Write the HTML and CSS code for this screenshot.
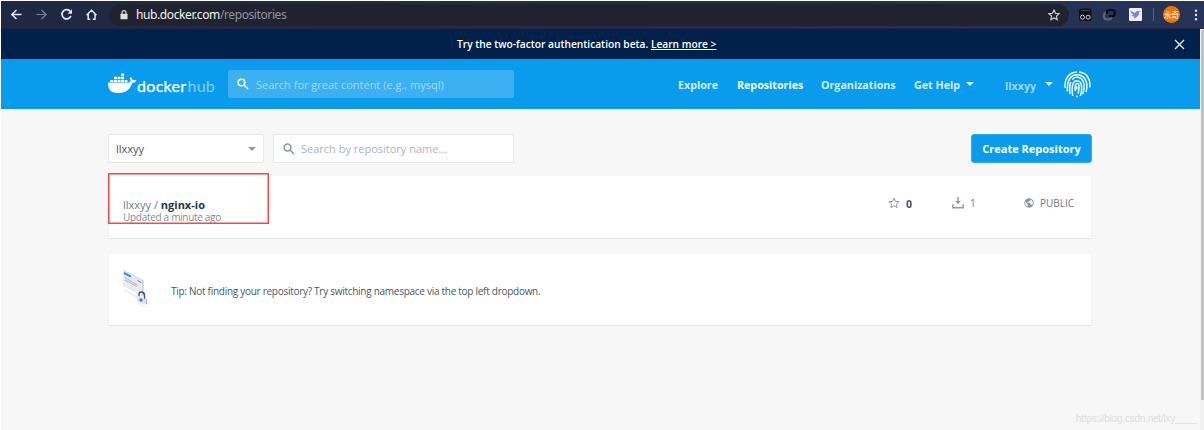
FILE: index.html
```html
<!DOCTYPE html>
<html lang="en">
<head>
<meta charset="utf-8">
<title>Docker Hub</title>
<link rel="stylesheet" href="styles.css">
</head>
<body>
<div class="window">
  <div class="chrome">
    <svg class="nav-icons" width="104" height="28" viewBox="0 0 104 28" fill="none" stroke="#e4e8ef" stroke-width="1.5">
      <path d="M20.5 13.5H11M15.5 9l-4.7 4.5 4.700 4.500"/>
      <path d="M35.500 13.500H45M40.500 9l4.700 4.500-4.700 4.500" stroke="#7a8292" stroke-width="1.200"/>
      <path d="M69.300 10.500a4.600 4.600 0 1 0 .6 4.500" stroke-width="1.700"/>
      <path d="M71 8.300v4.500h-4.500z" fill="#e4e8ef" stroke="none"/>
      <path d="M85.500 14.200l5-4.900 5 4.900M87.200 13v5.300h2M94 13v5.300h-2.200"/>
    </svg>
    <div class="address">
      <svg width="8" height="10" viewBox="0 0 8 10"><path d="M2 4V2.700a2 2 0 0 1 4 0V4" fill="none" stroke="#dfe0e3" stroke-width="1.200"/><rect x=".5" y="3.700" width="7" height="5.600" rx=".6" fill="#dfe0e3"/></svg>
      <span class="url">hub.docker.com<span class="url-path">/repositories</span></span>
      <svg class="bookmark" width="12" height="12" viewBox="0 0 12 12"><path d="M6 1l1.500 3.300 3.600.4-2.700 2.400.8 3.600L6 8.900l-3.200 1.800.8-3.600L.9 4.700l3.600-.4z" fill="none" stroke="#d5d7dc" stroke-width="1.100"/></svg>
    </div>
    <svg class="extensions" width="60" height="28" viewBox="0 0 60 28">
      <rect x="1" y="7.500" width="12.500" height="12.500" rx="2" fill="#101116"/>
      <g fill="none" stroke="#c9ccd1"><circle cx="4.500" cy="16.200" r="2"/><circle cx="10.200" cy="16.200" r="2"/></g>
      <path d="M3 9.500h9" stroke="#3b3d45"/>
      <g fill="none" stroke-width="2.200"><path d="M33.500 15.500q0 2.800-2.500 2.800h-2.500q-2.500 0-2.500-2.500v-1.500q0-2.500 2.500-2.500H30" stroke="#5c6370"/><path d="M29 13V11.500q0-2.500 2.500-2.500H34q2.700 0 2.700 2.500V13q0 2.200-2.500 2.200H31" stroke="#090b12"/></g>
    </svg>
    <svg width="13" height="13" viewBox="0 0 13 13"><rect width="13" height="13" rx="1.200" fill="#f0f2fb"/><path d="M1.200 2.500l4.500 2.600q1.500-2.400 4-2.400l2.200.8-1.700.6q.2 3.300-2.200 5-1.500 1.100-3.400 1.700l.8-2Q3.400 8.600 2.600 7l2 .1Q1.800 5.500 1.200 2.500z" fill="#7187f0"/></svg>
    <span class="divider"></span>
    <span class="avatar">永奇</span>
    <svg class="dots" width="4" height="12" viewBox="0 0 4 12" fill="#e2e5ec"><circle cx="2" cy="1.700" r="1.200"/><circle cx="2" cy="6" r="1.200"/><circle cx="2" cy="10.300" r="1.200"/></svg>
  </div>

  <div class="viewport">
    <div class="page">
      <div class="banner">
        <p class="banner-text">Try the two-factor authentication beta. <a>Learn more &gt;</a></p>
        <svg class="close" width="11" height="11" viewBox="0 0 11 11"><path d="M1 1l9 9M10 1l-9 9" stroke="#e7edf3" stroke-width="1.400"/></svg>
      </div>
      <header class="header">
        <div class="logo">
          <svg width="29" height="22" viewBox="0 0 29 22" fill="#fff">
            <path d="M0 9.500h21.200c1-.3 1.500-.9 1.300-1.800-.8-1.400-.7-2.500 0-3.600 1.400.8 2 1.900 2.100 3 1.300-.3 2.600-.2 3.900.5-.7 1.700-2.200 2.400-4.300 2.500C22.200 16.500 18.200 20 10.400 20 3.300 20 .1 17.200 0 9.500z"/>
            <path d="M2.300 7h2.900v2H2.300zM6 7h2.900v2H6zM9.600 7h2.900v2H9.600zM13.200 7h2.900v2h-2.900zM16.800 7h2.600v2h-2.600zM6 3.700h2.900v2.500H6zM9.600 3.700h2.900v2.500H9.600zM13.200 3.700h2.900v2.500h-2.900zM13.200.4h2.900v2.500h-2.900z"/>
          </svg>
          <span class="brand">docker</span><span class="brand-hub">hub</span>
        </div>
        <div class="top-search">
          <svg width="12" height="12" viewBox="0 0 12 12" fill="none" stroke="#fff" stroke-width="1.500"><circle cx="4.500" cy="4.500" r="3.300"/><path d="M7 7l4 4"/></svg>
          <span>Search for great content (e.g., mysql)</span>
        </div>
        <nav class="menu">
          <a class="explore">Explore</a><a class="repositories">Repositories</a><a class="orgs">Organizations</a><a class="help">Get Help</a><i class="caret"></i>
          <a class="user">llxxyy</a><i class="caret user-caret"></i>
        </nav>
        <svg class="fingerprint" width="27" height="27" viewBox="0 0 27 27" fill="none" stroke="#f1faff" stroke-width="1.500">
          <path d="M1.200 17C-.2 7.500 5.500 1.300 13 1M15 1c7.400.5 12 7 10.700 15.500"/>
          <path d="M3.500 20.500C2.800 9.500 6.500 3.700 13 3.700c6.800 0 10.700 5.800 9.700 13.800l-.6 3.500"/>
          <path d="M6 23.200c-.6-5-.6-9.300.8-12.200M8.200 8.500c3.300-3.800 8.700-2.800 10.700 1.200 1.700 3.500 1.300 9-.1 13.500"/>
          <path d="M8.700 25c-.7-4.500-1-9.200.4-12.500 1.700-3.700 6.800-3.500 8 .6.800 3.200.5 8.200-.8 12"/>
          <path d="M11.300 20c-.5-4-.2-7.500 2-7.500 2.500 0 1.700 6 .9 10M12.800 15.500v3M13 24.500v1.700"/>
        </svg>
      </header>
      <main class="content">
        <div class="toolbar">
          <div class="select"><span>llxxyy</span><i class="caret"></i></div>
          <div class="search">
            <svg width="12" height="12" viewBox="0 0 12 12" fill="none" stroke="#8796a3" stroke-width="1.500"><circle cx="4.500" cy="4.500" r="3.400"/><path d="M7 7l4 4"/></svg>
            <span>Search by repository name...</span>
          </div>
          <button class="create"><span>Create Repository</span></button>
        </div>
        <section class="card repo">
          <div class="repo-info">
            <div class="repo-name"><span>llxxyy / </span><b>nginx-io</b></div>
            <div class="updated">Updated a minute ago</div>
          </div>
          <div class="stat stars">
            <svg width="12" height="12" viewBox="0 0 12 12"><path d="M6 1l1.400 3.400 3.700.3-2.800 2.400.9 3.600L6 8.800l-3.200 1.900.9-3.600L.9 4.700l3.700-.3z" fill="none" stroke="#8f9ba7"/></svg>
            <b>0</b>
          </div>
          <div class="stat pulls">
            <svg width="12" height="12" viewBox="0 0 12 12" fill="none" stroke="#8c99a7"><path d="M6 0v5" stroke-width="1.500"/><path d="M3.300 4h5.400L6 7.300z" fill="#8c99a7" stroke="none"/><path d="M.9 7.300v3.500h10.200V7.300" stroke-width="1.500"/></svg>
            <span>1</span>
          </div>
          <div class="stat visibility">
            <svg width="10" height="10" viewBox="0 0 10 10"><circle cx="5" cy="5" r="4.700" fill="#8795a3"/><path d="M1.200 3.800l2.500 2.500v2.500Q.8 7.600 1.200 3.800zM3.700 4.800h2.600v1.500h1.200v1.300Q9 6.300 8.800 4.500 8.500 2.400 6.500 1.500v1.200H5v1H3.700z" fill="#fff"/></svg>
            <span>PUBLIC</span>
          </div>
          <div class="highlight"></div>
        </section>
        <section class="card tip">
          <svg width="26" height="40" viewBox="0 0 26 40">
            <path d="M1 21l15 8M15 34l7 4" stroke="#eef0f3" stroke-width="2"/>
            <path d="M0 1l20 10v16L0 17z" fill="#e7ebf0"/>
            <path d="M0 1l20 10" stroke="#cbd4df" stroke-width=".7"/><path d="M20 11v16" stroke="#b9c4d2"/>
            <path d="M1 4l7 3.700" stroke="#2496e8" stroke-width="2"/>
            <path d="M1.500 8.500l13 7.500M2 11l12 6.500" stroke="#92a0b2" stroke-width="1" stroke-dasharray="1.400 .6"/>
            <path d="M14.500 11.300l4 2.500" stroke="#6583b8"/>
            <path d="M16 28v-2.500c0-4 5.500-3 5.500 1V30" fill="none" stroke="#40546e" stroke-width="1.500"/>
            <path d="M14 26l9 4.500V36l-9-4z" fill="#dce5f0"/><path d="M23 30l1-.5v5L23 36z" fill="#a8b5c5"/><circle cx="18" cy="31" r="1.700" fill="#2c88dd"/>
          </svg>
          <span class="tip-text">Tip: Not finding your repository? Try switching namespace via the top left dropdown.</span>
        </section>
      </main>
    </div>
    <div class="scrollbar"><div class="thumb"></div></div>
  </div>
  <div class="watermark">https://blog.csdn.net/lxy____</div>
</div>
</body>
</html>
```
FILE: styles.css
```css
* { box-sizing: border-box; }
body { margin: 0; background: #fff; font: 11px/16px "Open Sans", "Noto Sans", sans-serif; overflow: hidden; }
svg { display: block; flex: none; }
span, a { white-space: nowrap; }
.window { position: relative; width: 1204px; height: 430px; padding: 1px 0 0 1px; }
.chrome { display: flex; align-items: center; height: 28px; background: linear-gradient(90deg, #1d2942, #222f50 70%, #253457); border-bottom: 1px solid #2b2345; }
.address { display: flex; align-items: center; width: 960px; height: 22px; margin-left: 4px; padding: 0 9px 0 11px; border-radius: 11px; background: #20222f; }
.url { margin-left: 8px; font: 12px/16px "Noto Sans", sans-serif; letter-spacing: -.4px; color: #f1f2f4; }
.url-path { color: #92949c; }
.bookmark { margin-left: auto; }
.extensions { margin-left: 9px; margin-right: -9px; }
.divider { width: 1px; height: 13px; margin-left: 11px; background: #566079; }
.avatar { width: 17px; height: 17px; margin-left: 9px; border-radius: 50%; background: #f17400; color: #fff; font: 7.500px/17px "Noto Sans CJK SC", sans-serif; text-align: center; }
.dots { margin-left: 14px; }
.viewport { display: flex; height: 401px; }
.page { width: 1199px; background: #f7f7f7; }
.scrollbar { width: 4px; background: #f0f0f0; padding-top: 1px; }
.thumb { height: 370px; margin-left: 1px; background: #c1c1c1; }
.banner { display: flex; align-items: center; height: 30px; padding-right: 15px; background: #00214a; color: #fff; }
.banner-text { margin: 0 0 0 456px; font-size: 10.200px; font-weight: 600; }
.banner-text a { text-decoration: underline; }
.close { margin-left: auto; }
.header { display: flex; align-items: center; height: 50px; padding-left: 107px; background: #099cec; }
.logo { display: flex; align-items: center; width: 120px; color: #fff; font: 16px/20px Lato, sans-serif; letter-spacing: .3px; }
.brand, .brand-hub { padding-top: 3px; }
.brand { -webkit-text-stroke: .25px #fff; }
.brand-hub { margin-left: 1px; opacity: .5; }
.top-search { display: flex; align-items: center; gap: 7px; width: 286px; height: 28px; padding-left: 9px; border-radius: 2px; background: #3cb0f0; color: #a3dafa; }
.top-search span { padding-top: 1px; }
.menu { display: flex; align-items: center; width: 386px; margin-left: 164px; color: #d2effd; font-size: 10.700px; font-weight: 700; }
.menu a { padding-top: 2px; }
.explore { width: 59px; }
.repositories { width: 84px; color: #f3fbff; }
.orgs { width: 93px; }
.caret { border: 4px solid transparent; border-top: 4px solid #d9f1fe; border-bottom: 0; }
.help { width: 52px; }
.menu .user { width: 40px; margin-left: 31px; padding-top: 3px; color: #9dd8fb; }
.content { padding: 25px 108px 0 107px; }
.toolbar { display: flex; height: 29px; }
.select { display: flex; align-items: center; justify-content: space-between; width: 156px; height: 29px; padding: 0 7px; border: 1px solid #e8e8e8; border-radius: 2px; background: #fff; color: #4b535b; }
.select .caret { border-top-color: #999; }
.search { display: flex; align-items: center; gap: 6px; width: 241px; margin-left: 9px; padding-left: 9px; border: 1px solid #e6e8e9; background: #fff; color: #a9b5bf; }
.create { display: flex; align-items: center; justify-content: center; width: 121px; height: 29px; margin-left: auto; padding: 1px 0 0; border: 1px solid #33aaf1; border-radius: 3px; background: #099cec; color: #fff; font: 700 11px/16px "Open Sans", sans-serif; }
.card { position: relative; display: flex; background: #fff; border: 1px solid #f0f1f2; border-top: 0; border-bottom-color: #e1e4e6; }
.repo { height: 63px; margin-top: 13px; color: #6f7a85; }
.repo-info { width: 765px; padding: 22px 0 0 14px; }
.repo-name { height: 12px; line-height: 13px; white-space: pre; }
.repo-name b { color: #213746; }
.updated { height: 14px; font-size: 10px; line-height: 15px; letter-spacing: -.3px; color: #858a8f; }
.stat { display: flex; align-items: center; height: 16px; margin-top: 19px; font-size: 10px; }
.stars { width: 64px; padding-left: 14px; gap: 6px; color: #445464; }
.stars b { padding-top: 1px; font-size: 10.500px; }
.pulls { width: 72px; padding-left: 14px; gap: 6px; }
.visibility { padding-left: 14px; gap: 6px; }
.highlight { position: absolute; left: -1px; top: -3px; width: 161px; height: 51px; border: 1px solid #fb4548; box-shadow: inset 0 0 0 .5px #fb4548; }
.tip { height: 72px; margin-top: 15px; padding: 15px 0 0 14px; color: #4b5661; }
.tip-text { margin: 14px 0 0 22px; font-size: 10px; letter-spacing: -.275px; }
.watermark { position: absolute; left: 1076px; top: 411px; color: #dedede; font: 10px/16px "Liberation Sans", sans-serif; letter-spacing: -.22px; }
```
